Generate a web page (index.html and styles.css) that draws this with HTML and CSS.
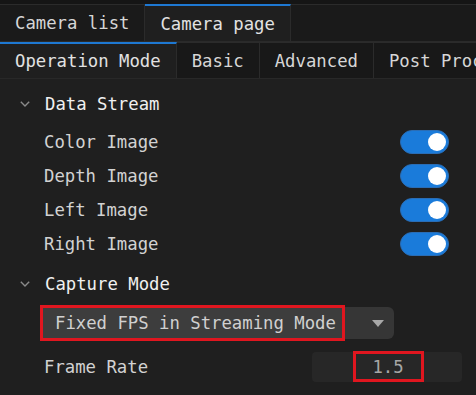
FILE: index.html
```html
<!DOCTYPE html>
<html>
<head>
<meta charset="utf-8">
<link rel="stylesheet" href="styles.css">
</head>
<body>
<div class="tabs tabs-top">
  <div class="tab">Camera list</div>
  <div class="tab active">Camera page</div>
  <div class="tab-fill"></div>
</div>
<div class="tabs tabs-sub">
  <div class="tab active">Operation Mode</div>
  <div class="tab">Basic</div>
  <div class="tab">Advanced</div>
  <div class="tab">Post Processing</div>
</div>
<div class="content">
  <div class="section-head">
    <svg class="chev" width="10" height="6" viewBox="0 0 10 6"><polyline points="0.8,0.8 5,5 9.2,0.8" fill="none" stroke="#8a8a8a" stroke-width="1.4"/></svg>
    <span>Data Stream</span>
  </div>
  <div class="items">
    <div class="item"><span>Color Image</span><div class="toggle"><div class="knob"></div></div></div>
    <div class="item"><span>Depth Image</span><div class="toggle"><div class="knob"></div></div></div>
    <div class="item"><span>Left Image</span><div class="toggle"><div class="knob"></div></div></div>
    <div class="item"><span>Right Image</span><div class="toggle"><div class="knob"></div></div></div>
  </div>
  <div class="section-head capture">
    <svg class="chev" width="10" height="6" viewBox="0 0 10 6"><polyline points="0.8,0.8 5,5 9.2,0.8" fill="none" stroke="#8a8a8a" stroke-width="1.4"/></svg>
    <span>Capture Mode</span>
  </div>
  <div class="dropdown">
    <div class="dd-value">Fixed FPS in Streaming Mode</div>
    <div class="dd-arrow"><svg width="12" height="7" viewBox="0 0 12 7"><polygon points="0,0 12,0 6,7" fill="#a8a8a8"/></svg></div>
  </div>
  <div class="field">
    <span>Frame Rate</span>
    <div class="num"><span class="num-val">1.5</span></div>
  </div>
</div>
</body>
</html>
```
FILE: styles.css
```css
html, body {
  margin: 0;
  padding: 0;
}
body {
  width: 476px;
  height: 395px;
  overflow: hidden;
  background: #1f1f1f;
  font-family: "DejaVu Sans Mono", "Liberation Mono", monospace;
  font-size: 17.3px;
  color: #d2d2d2;
}
.tabs {
  display: flex;
  white-space: nowrap;
  overflow: hidden;
}
.tabs-top {
  padding-top: 4px;
  background: #151515;
  border-bottom: 1px solid #2a2a2a;
}
.tab {
  box-sizing: border-box;
  height: 37px;
  display: flex;
  align-items: center;
  padding: 0 15px;
  border-top: 1px solid #2b2b2b;
  border-right: 1px solid #2b2b2b;
  background: #1a1a1a;
  color: #d6d6d6;
  flex-shrink: 0;
}
.tab.active {
  border-top: 2px solid #1e78d2;
  background: #1f1f1f;
  color: #e2e2e2;
}
.tab-fill {
  flex: 1;
  border-top: 1px solid #2b2b2b;
  background: #1a1a1a;
}
.tabs-sub {
  background: #1f1f1f;
  border-bottom: 1px solid #282828;
}
.tabs-sub .tab {
  height: 36px;
  background: #181818;
}
.tabs-sub .tab.active {
  background: #1f1f1f;
}
.content {
  padding-top: 8px;
}
.section-head {
  height: 34px;
  display: flex;
  align-items: center;
  color: #f0f0f0;
}
.chev {
  margin-left: 20px;
  margin-right: 15px;
}
.items {
  margin-top: 4px;
}
.item {
  height: 34px;
  display: flex;
  align-items: center;
  justify-content: space-between;
  padding-left: 44px;
  padding-right: 27px;
}
.toggle {
  box-sizing: border-box;
  width: 49px;
  height: 24px;
  border-radius: 12px;
  background: #1a7bda;
  border: 1px solid #2a6db5;
  display: flex;
  align-items: center;
  justify-content: flex-end;
  padding-right: 2px;
}
.knob {
  width: 18px;
  height: 18px;
  border-radius: 50%;
  background: #ffffff;
}
.capture {
  margin-top: 6px;
}
.dropdown {
  margin-top: 4px;
  margin-left: 40px;
  width: 354px;
  height: 36px;
  display: flex;
  align-items: center;
}
.dd-value {
  box-sizing: border-box;
  width: 305px;
  height: 36px;
  border: 3px solid #e0161f;
  background: #3d3d3d;
  display: flex;
  align-items: center;
  padding-left: 12px;
  color: #d0d0d0;
}
.dd-arrow {
  flex: 1;
  height: 32px;
  background: #363636;
  border-radius: 0 6px 6px 0;
  display: flex;
  align-items: center;
  justify-content: center;
  padding-left: 17px;
}
.field {
  margin-top: 10px;
  height: 31px;
  display: flex;
  align-items: center;
  justify-content: space-between;
  padding-left: 44px;
  padding-right: 14px;
}
.num {
  width: 150px;
  height: 30px;
  border-radius: 4px;
  background: #272727;
  display: flex;
  align-items: center;
  justify-content: center;
  padding-left: 2px;
  box-sizing: border-box;
}
.num-val {
  box-sizing: border-box;
  width: 71px;
  height: 31px;
  border: 3px solid #e0161f;
  display: flex;
  align-items: center;
  justify-content: center;
  color: #a6a6a6;
}
```
